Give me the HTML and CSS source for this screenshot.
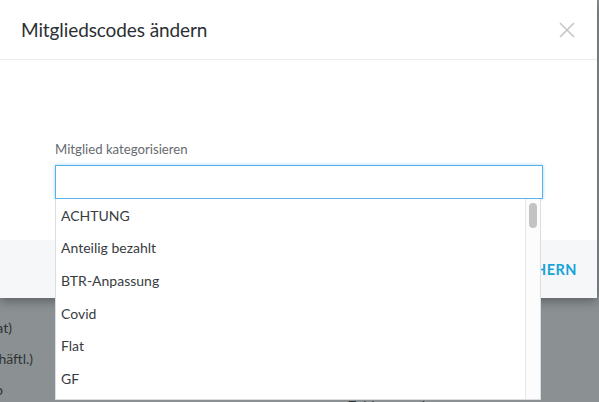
FILE: index.html
```html
<!DOCTYPE html>
<html lang="de">
<head>
<meta charset="utf-8">
<link rel="stylesheet" href="styles.css">
</head>
<body>
<div class="page">
  <div class="bg-rows">
    <div class="bg-row bg-row-short">Beitrag (Monat)</div>
    <div class="bg-row">Telefon (geschäftl.)</div>
    <div class="bg-row bg-row-cut">Info</div>
  </div>
  <div class="bg-note">Zahlungsweise</div>
</div>

<div class="modal">
  <div class="modal-header">
    <h1 class="modal-title">Mitgliedscodes ändern</h1>
    <svg class="close" width="16" height="16" viewBox="0 0 16 16">
      <path d="M1 1 L15 15 M15 1 L1 15" stroke="#c6c6c6" stroke-width="1.6" fill="none"/>
    </svg>
  </div>
  <div class="modal-body">
    <label class="field-label">Mitglied kategorisieren</label>
    <div class="field-input"></div>
  </div>
  <div class="modal-footer">
    <span class="save">SPEICHERN</span>
  </div>
</div>

<div class="dropdown">
  <ul class="options">
    <li>ACHTUNG</li>
    <li>Anteilig bezahlt</li>
    <li>BTR-Anpassung</li>
    <li>Covid</li>
    <li>Flat</li>
    <li>GF</li>
    <li>Kündigung</li>
  </ul>
  <div class="scrollbar"><div class="thumb"></div></div>
</div>
</body>
</html>
```
FILE: styles.css
```css
* { box-sizing: border-box; }
html, body {
  margin: 0;
  padding: 0;
  width: 599px;
  height: 402px;
  overflow: hidden;
  font-family: Lato, "Open Sans", sans-serif;
}
body { background: #8b9092; position: relative; }

.page { position: relative; width: 599px; height: 402px; }
.bg-rows {
  display: flex;
  flex-direction: column;
  align-items: flex-end;
  width: 300px;
  margin-left: -267px;
  padding-top: 318px;
  gap: 12px;
}
.bg-row {
  font-size: 14px;
  line-height: 19px;
  color: #2f3436;
  white-space: nowrap;
}
.bg-row-short { padding-right: 21px; }
.bg-row-cut { padding-right: 30px; }
.bg-note {
  position: absolute;
  left: 348px;
  top: 397px;
  font-size: 14px;
  color: #2f3436;
}

.modal {
  position: absolute;
  left: 0;
  top: 0;
  width: 597px;
  height: 298px;
  background: #fff;
  display: flex;
  flex-direction: column;
  box-shadow: 0 3px 10px rgba(0,0,0,0.35);
}
.modal-header {
  flex: 0 0 60px;
  border-bottom: 1px solid #ebebeb;
  display: flex;
  align-items: center;
  justify-content: space-between;
  padding: 0 21px 0 21px;
}
.modal-title {
  margin: 0;
  font-size: 19px;
  font-weight: 400;
  color: #2b2f33;
  letter-spacing: -0.1px;
  padding-bottom: 1px;
}
.close { margin-right: 1px; margin-top: 0; }

.modal-body {
  flex: 1 1 auto;
  padding: 80px 54px 0 55px;
  display: flex;
  flex-direction: column;
}
.field-label {
  font-size: 13.2px;
  line-height: 18px;
  color: #676b6f;
  margin-bottom: 7px;
}
.field-input {
  flex: 0 0 34px;
  border: 1px solid #5ab2ea;
  box-shadow: 0 0 3px rgba(90,178,234,0.6);
  background: #fff;
}

.modal-footer {
  flex: 0 0 58px;
  background: #f5f7f9;
  display: flex;
  align-items: center;
  justify-content: flex-end;
  padding-right: 20px;
}
.save {
  font-size: 14.5px;
  font-weight: 700;
  color: #19a3d8;
  letter-spacing: 0.5px;
}

.dropdown {
  position: absolute;
  left: 55px;
  top: 199px;
  width: 486px;
  height: 201px;
  background: #fff;
  border: 1px solid #d9dee2;
  border-top: none;
  overflow: hidden;
  display: flex;
}
.options {
  list-style: none;
  margin: 0;
  padding: 0;
  flex: 1;
}
.options li {
  height: 32.6px;
  display: flex;
  align-items: center;
  padding-left: 5px;
  font-size: 14px;
  color: #383c3f;
}
.scrollbar {
  width: 15px;
  border-left: 1px solid #e6e9eb;
  background: #fcfcfc;
  padding: 4px 3px 0 3px;
}
.thumb {
  width: 8px;
  height: 25px;
  border-radius: 4px;
  background: #c3c3c3;
}
```
